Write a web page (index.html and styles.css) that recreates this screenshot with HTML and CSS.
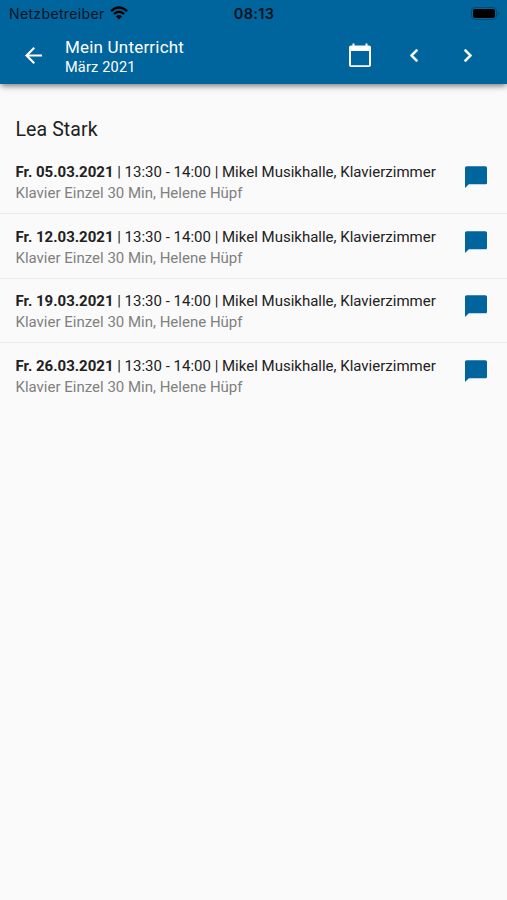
FILE: index.html
```html
<!DOCTYPE html>
<html lang="de">
<head>
<meta charset="utf-8">
<meta name="viewport" content="width=device-width, initial-scale=1">
<title>Mein Unterricht</title>
<link rel="stylesheet" href="styles.css">
</head>
<body>
<svg width="0" height="0" class="defs" aria-hidden="true">
  <symbol id="chat" viewBox="2 2 20 20"><path d="M20.500 2.300h-17C2.700 2.300 2 3 2 3.800V22l3.500-3.300h15c.8 0 1.500-.7 1.500-1.500V3.800c0-.8-.7-1.500-1.500-1.500z"/></symbol>
</svg>
<header class="header">
  <div class="status">
    <div class="carrier"><span>Netzbetreiber</span>
      <svg class="wifi" viewBox="0 0 18 14"><path d="M1 5.100Q9-2 17 5.100M3.900 8Q9 3.600 14.100 8" fill="none" stroke="#000" stroke-width="2.300"/><path d="M9 13.500 5.900 10.200Q9 7.800 12.100 10.200Z"/></svg>
    </div>
    <div class="clock">08:13</div>
    <svg class="battery" viewBox="0 0 30 14"><rect x=".5" y=".5" width="25" height="12" rx="3.500" fill="none" stroke="#034b76"/><rect x="2" y="2" width="22" height="9" rx="2"/><path d="M27 4.500q2 2 0 4z" fill="#034b76"/></svg>
  </div>
  <div class="toolbar">
    <svg class="back" viewBox="4 4 16 16"><path d="M20 11H7.830l5.590-5.590L12 4l-8 8 8 8 1.410-1.410L7.830 13H20z"/></svg>
    <div class="titles">
      <h1>Mein Unterricht</h1>
      <p>März 2021</p>
    </div>
    <svg class="calendar" viewBox="0 0 22 24"><path d="M20 2.500h-1.500V.5h-2v2h-11v-2h-2v2H2c-1.100 0-2 .9-2 2V22c0 1.100.9 2 2 2h18c1.100 0 2-.9 2-2V4.500c0-1.100-.9-2-2-2zm0 19.700H2V8h18z"/></svg>
    <svg class="chevron prev" viewBox="8 6 7.410 12"><path d="M15.410 7.410 14 6l-6 6 6 6 1.410-1.410L10.830 12z"/></svg>
    <svg class="chevron" viewBox="8.590 6 7.410 12"><path d="M10 6 8.590 7.410 13.170 12l-4.580 4.590L10 18l6-6z"/></svg>
  </div>
</header>
<main>
  <h2>Lea Stark</h2>
  <ul class="lessons">
    <li><div class="info"><p class="when"><b>Fr. 05.03.2021</b> | 13:30 - 14:00 | Mikel Musikhalle, Klavierzimmer</p><p class="what">Klavier Einzel 30 Min, Helene Hüpf</p></div><svg class="chat"><use href="#chat"/></svg></li>
    <li><div class="info"><p class="when"><b>Fr. 12.03.2021</b> | 13:30 - 14:00 | Mikel Musikhalle, Klavierzimmer</p><p class="what">Klavier Einzel 30 Min, Helene Hüpf</p></div><svg class="chat"><use href="#chat"/></svg></li>
    <li><div class="info"><p class="when"><b>Fr. 19.03.2021</b> | 13:30 - 14:00 | Mikel Musikhalle, Klavierzimmer</p><p class="what">Klavier Einzel 30 Min, Helene Hüpf</p></div><svg class="chat"><use href="#chat"/></svg></li>
    <li><div class="info"><p class="when"><b>Fr. 26.03.2021</b> | 13:30 - 14:00 | Mikel Musikhalle, Klavierzimmer</p><p class="what">Klavier Einzel 30 Min, Helene Hüpf</p></div><svg class="chat"><use href="#chat"/></svg></li>
  </ul>
</main>
</body>
</html>
```
FILE: styles.css
```css
* { box-sizing: border-box; margin: 0; padding: 0; }
body { min-height: 900px; background: #fafafa; color: #212121; font-family: Roboto, sans-serif; }
svg { display: block; flex: none; }
.defs { position: absolute; }
.header { height: 84px; background: #00659d; box-shadow: 0 3px 5px -1px rgba(0, 0, 0, .4), 0 3px 8px rgba(0, 0, 0, .12); }
.status { display: grid; grid-template-columns: 1fr auto 1fr; align-items: center; height: 27px; padding: 0 6px 0 9px; color: #000; font-family: Inter, sans-serif; font-size: 14px; }
.carrier { display: flex; align-items: center; gap: 5px; letter-spacing: .36px; }
.carrier span, .clock { opacity: .82; }
.wifi { width: 18px; height: 14px; margin-top: -2px; }
.clock { margin-left: -2px; font-weight: 600; font-size: 14.5px; letter-spacing: .3px; }
.battery { width: 30px; height: 14px; justify-self: end; }
.toolbar { display: flex; align-items: center; height: 56px; padding: 0 35px 0 25px; color: #fff; fill: #fff; }
.back { width: 17px; height: 17px; }
.titles { flex: 1; margin: 5px 0 0 23px; }
h1 { font-size: 17px; font-weight: 400; line-height: 21px; letter-spacing: .2px; }
.titles p { font-size: 14.5px; line-height: 20px; letter-spacing: .2px; }
.calendar { width: 22px; height: 24px; margin-right: 39.500px; }
.chevron { width: 8px; height: 13px; stroke: #fff; stroke-width: .4; }
.prev { margin-right: 46px; }
h2 { padding: 33px 15.500px 0; font-size: 19.500px; font-weight: 400; line-height: 26px; letter-spacing: .1px; }
.lessons { padding-top: 6.300px; list-style: none; }
.lessons li { display: flex; justify-content: space-between; height: 64.700px; padding: 12.700px 20px 0 15.500px; border-bottom: 1px solid #ececec; }
.lessons li:last-child { border-bottom: 0; }
.when, .what { font-size: 15px; line-height: 21px; white-space: nowrap; }
.what { color: #808080; }
.chat { width: 22px; height: 22px; margin-top: 4px; fill: #00659d; }
```
